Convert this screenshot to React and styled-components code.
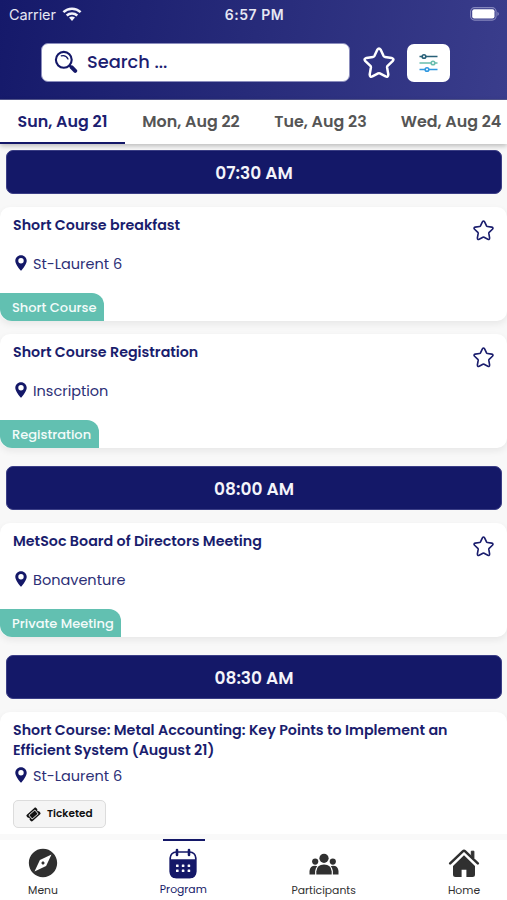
import React from 'react';
import styled, { createGlobalStyle } from 'styled-components';
import { FaTicket } from 'react-icons/fa6';
import { MdExplore } from 'react-icons/md';

const NAVY = '#141868';
const TEAL = '#62c0b1';
const DARK = '#303030';

const GlobalStyle = createGlobalStyle`
  * {
    box-sizing: border-box;
  }
  body {
    margin: 0;
    background: #f8f8f8;
    font-family: Poppins, Inter, sans-serif;
  }
`;

const Screen = styled.div`
  width: 507px;
  height: 900px;
  display: flex;
  flex-direction: column;
  overflow: hidden;
  background: #f8f8f8;
`;

const Header = styled.header`
  flex: none;
  height: 100px;
  background: linear-gradient(100deg, #15196a 0%, #272b7a 50%, #3a3d8c 100%);
  border-bottom: 1px solid #54578f;
`;

const StatusBar = styled.div`
  height: 28px;
  padding: 0 7px 0 9px;
  display: grid;
  grid-template-columns: 1fr auto 1fr;
  align-items: center;
  color: #e6e7f3;
  font-family: Inter, sans-serif;
  font-size: 14.5px;
`;

const Carrier = styled.div`
  height: 26px;
  display: flex;
  align-items: center;
  gap: 6px;
  letter-spacing: -0.1px;
`;

const Clock = styled.div`
  font-weight: 600;
  font-size: 14px;
  letter-spacing: 0.5px;
`;

const Battery = styled.div`
  justify-self: end;
  display: flex;
`;

const SearchRow = styled.div`
  display: flex;
  align-items: center;
  padding: 15px 0 0 41px;
`;

const SearchBox = styled.div`
  width: 309px;
  height: 39px;
  padding: 0 0 2px 12px;
  display: flex;
  align-items: center;
  gap: 9px;
  border: 1px solid #8b8dbd;
  border-radius: 7px;
  background: white;
  color: #1c2070;
  font-size: 17.8px;
  font-weight: 500;
`;

const HeaderStar = styled.div`
  display: flex;
  margin: 1px 12px 0 13px;
  color: white;
`;

const FilterButton = styled.div`
  width: 43px;
  height: 38px;
  display: flex;
  align-items: center;
  justify-content: center;
  border-radius: 7px;
  background: white;
`;

const Tabs = styled.nav`
  position: relative;
  flex: none;
  height: 44px;
  display: flex;
  background: white;
  box-shadow: 0 2px 5px rgba(0, 0, 0, 0.25);
`;

const Tab = styled.div`
  flex: none;
  width: ${({ $width }) => $width}px;
  padding-top: ${({ $active }) => ($active ? 1 : 0)}px;
  padding-bottom: ${({ $active }) => ($active ? 0 : 1)}px;
  display: flex;
  align-items: center;
  justify-content: center;
  white-space: nowrap;
  border-bottom: ${({ $active }) => ($active ? `2px solid ${NAVY}` : 'none')};
  color: ${({ $active }) => ($active ? '#1c2070' : '#555')};
  font-size: 15.9px;
  font-weight: 600;
`;

const List = styled.main`
  flex: 1;
  min-height: 0;
  overflow: hidden;
  padding-top: 6px;
`;

const TimeBar = styled.div`
  height: 44px;
  margin: 0 5px 13px 6px;
  padding-top: 1px;
  display: flex;
  align-items: center;
  justify-content: center;
  border: 1px solid #3b3e86;
  border-radius: 7px;
  background: ${NAVY};
  color: #f4f4fa;
  font-size: 17px;
  font-weight: 600;
`;

const Card = styled.article`
  position: relative;
  height: ${({ $tall }) => ($tall ? 140 : 114)}px;
  margin-bottom: ${({ $last }) => ($last ? 18 : 13)}px;
  padding: 8px 13px 0;
  border-radius: 10px;
  background: white;
  box-shadow: 0 3px 7px rgba(0, 0, 0, 0.07);
  color: #1a1d6d;
`;

const CardTop = styled.div`
  display: flex;
  justify-content: space-between;
`;

const Title = styled.div`
  min-height: ${({ $tall }) => ($tall ? 0 : 39)}px;
  font-size: 14.25px;
  font-weight: 600;
  line-height: 20px;
`;

const CardStar = styled.div`
  display: flex;
  height: 21px;
  margin-top: 5px;
`;

const Place = styled.div`
  height: 20px;
  margin-top: ${({ $tall }) => ($tall ? 6 : 0)}px;
  padding-left: 2px;
  display: flex;
  align-items: center;
  gap: 6px;
  font-size: 14.5px;
  color: #2c2f76;

  svg {
    margin-top: -3px;
  }
`;

const Tag = styled.div`
  position: absolute;
  left: 0;
  bottom: 0;
  width: ${({ $width }) => $width}px;
  height: 28px;
  padding-left: 12px;
  border-radius: 0 12px 0 12px;
  background: ${TEAL};
  color: #f3fbfa;
  font-size: 13px;
  font-weight: 500;
  line-height: 29px;
  white-space: nowrap;
`;

const Ticketed = styled.div`
  width: 93px;
  height: 28px;
  margin-top: 14px;
  padding-left: 13px;
  display: flex;
  align-items: center;
  gap: 7px;
  border: 1px solid #dcdcdc;
  border-radius: 5px;
  background: #f5f5f5;
  color: #111;
  font-size: 10.5px;
  font-weight: 600;

  svg {
    transform: rotate(-42deg);
  }
`;

const BottomNav = styled.footer`
  position: relative;
  flex: none;
  height: 66px;
  display: flex;
  justify-content: space-between;
  border-top: 6px solid #f9f9f9;
  background: white;
`;

const NavItem = styled.div`
  width: 86px;
  padding-top: 9px;
  margin-top: ${({ $active }) => ($active ? -1 : 0)}px;
  display: flex;
  flex-direction: column;
  align-items: center;
  color: ${({ $active }) => ($active ? NAVY : DARK)};
  font-size: 10.8px;
  line-height: 14px;
  background: ${({ $active }) =>
    $active ? `linear-gradient(${NAVY}, ${NAVY}) 23px top / 42px 2px no-repeat` : 'none'};
`;

const NavIcon = styled.div`
  height: 35px;
  display: flex;
  align-items: flex-start;
`;

const CompassIcon = styled(MdExplore)`
  margin-top: -3px;
`;

const StarIcon = ({ size, stroke }) => (
  <svg width={size} height={size} viewBox="0 0 32 32" fill="none" stroke="currentColor"
    strokeWidth={stroke} strokeLinejoin="round">
    <path d="M14.3 2.8Q16 .3 17.7 2.8L20.6 9Q21 9.8 22 9.9L28.6 10.9Q31.6 11.9 29.6 14.1L24.6 18.9Q24 19.6 24.1 20.5L25.3 27.4Q25.2 30.4 22.6 29.4L16.9 26.4Q16 26 15.1 26.4L9.4 29.4Q6.8 30.4 6.7 27.4L7.9 20.5Q8 19.6 7.4 18.9L2.4 14.1Q.4 11.9 3.4 10.9L10 9.9Q11 9.8 11.4 9Z" />
  </svg>
);

const WifiIcon = () => (
  <svg width="20" height="15" viewBox="0 0 20 15" fill="none" stroke="#f3f3fa" strokeWidth="2.5">
    <path d="M1.4 5.1C6.2.5 13.8.5 18.6 5.1" />
    <path d="M4.7 8.5C7.7 5.7 12.3 5.7 15.3 8.5" />
    <path d="M7 10.5Q10 8.3 13 10.5L10 14Z" fill="#f3f3fa" stroke="none" />
  </svg>
);

const BatteryIcon = () => (
  <svg width="30" height="14" viewBox="0 0 30 14">
    <rect x=".6" y=".6" width="25.5" height="12.5" rx="4" fill="none" stroke="#8587bd" strokeWidth="1.1" />
    <rect x="2.2" y="2.2" width="22.3" height="9.3" rx="2" fill="white" />
    <path d="M27.4 4.8Q30.5 6.9 27.4 9Z" fill="#8587bd" />
  </svg>
);

const SearchIcon = () => (
  <svg width="24" height="24" viewBox="0 0 24 24" fill="none" stroke={NAVY} strokeLinecap="round">
    <circle cx="9.8" cy="9.8" r="7.9" strokeWidth="2.1" />
    <path d="M7.3 5.9Q11.8 4.6 14 9" strokeWidth="1.3" />
    <path d="M15.5 15.5L18 18" strokeWidth="2.4" />
    <path d="M17.8 17.4L21.2 20.8" strokeWidth="4" />
  </svg>
);

const FilterIcon = () => (
  <svg width="19" height="20" viewBox="0 0 19 20" fill="none" strokeWidth="1.6">
    <g stroke="#286078">
      <path d="M.5 3.5H3M7 3.5H18.5" />
      <circle cx="5" cy="3.5" r="1.8" />
    </g>
    <g stroke="#68bdad">
      <path d="M.5 10H12M16 10H18.5" />
      <circle cx="14" cy="10" r="1.8" />
    </g>
    <g stroke="#2f98e0">
      <path d="M.5 16.5H6M10 16.5H18.5" />
      <circle cx="8" cy="16.5" r="1.8" />
    </g>
  </svg>
);

const PinIcon = () => (
  <svg width="12" height="16" viewBox="0 0 12 16" fill={NAVY}>
    <path fillRule="evenodd" d="M6 .2C9.3.2 11.7 2.7 11.7 5.8C11.7 8.7 8.8 12.6 6.8 15Q6 16 5.2 15C3.2 12.6.3 8.7.3 5.8C.3 2.7 2.7.2 6 .2ZM6 3.1A2.7 2.7 0 1 0 6 8.5A2.7 2.7 0 1 0 6 3.1Z" />
  </svg>
);

const CalendarIcon = () => (
  <svg width="28" height="31" viewBox="0 0 28 31">
    <rect x="1.2" y="4" width="25.6" height="25.5" rx="6" fill="white" stroke={NAVY} strokeWidth="1.7" />
    <path d="M1 11.3H27V24Q27 30.3 21 30.3H7Q1 30.3 1 24Z" fill={NAVY} />
    <path d="M8 2V7M20 2V7" stroke={NAVY} strokeWidth="2.6" strokeLinecap="round" />
    <g fill="white">
      {[17, 22].map(y => [7, 12.8, 18.6].map(x => (
        <rect key={`${x}-${y}`} x={x} y={y - 0.5} width="2.6" height="2.6" rx=".5" />
      )))}
    </g>
  </svg>
);

const PeopleIcon = () => (
  <svg width="30" height="28" viewBox="0 0 30 28" fill={DARK}>
    <circle cx="15" cy="9.3" r="4.6" />
    <circle cx="6.2" cy="12.6" r="3.1" />
    <circle cx="23.8" cy="12.6" r="3.1" />
    <path d="M7.3 25.5V22.5Q7.8 15.5 15 15.5T22.7 22.5V25.5Z" />
    <path d="M.5 25.5V22Q1 16.8 6 16.8Q7.3 16.8 8.3 17.3Q6.2 19.3 6.1 22V25.5Z" />
    <path d="M29.5 25.5V22Q29 16.8 24 16.8Q22.7 16.8 21.7 17.3Q23.8 19.3 23.9 22V25.5Z" />
  </svg>
);

const HomeIcon = () => (
  <svg width="32" height="29" viewBox="-1 0 32 29">
    <path d="M1.2 14.4L13.8 2.3Q15 1.2 16.2 2.3L28.8 14.4" fill="none" stroke={DARK} strokeWidth="2.5"
      strokeLinecap="round" strokeLinejoin="round" />
    <path d="M22.3 2.2H24.9V9L22.3 6.4Z" fill={DARK} stroke={DARK} strokeLinejoin="round" />
    <path d="M15 6.2L26 17V25.5Q26 28 23.5 28H17.4V20.7H12.6V28H6.5Q4 28 4 25.5V17Z" fill={DARK} />
  </svg>
);

const days = [
  { label: 'Sun, Aug 21', width: 125 },
  { label: 'Mon, Aug 22', width: 132 },
  { label: 'Tue, Aug 23', width: 127 },
  { label: 'Wed, Aug 24', width: 134 },
];

const slots = [
  {
    time: '07:30 AM',
    sessions: [
      { title: ['Short Course breakfast'], place: 'St-Laurent 6', tag: 'Short Course', tagWidth: 104 },
      { title: ['Short Course Registration'], place: 'Inscription', tag: 'Registration', tagWidth: 98.5 },
    ],
  },
  {
    time: '08:00 AM',
    sessions: [
      { title: ['MetSoc Board of Directors Meeting'], place: 'Bonaventure', tag: 'Private Meeting', tagWidth: 121 },
    ],
  },
  {
    time: '08:30 AM',
    sessions: [
      {
        title: [
          'Short Course: Metal Accounting: Key Points to Implement an',
          'Efficient System (August 21)',
        ],
        place: 'St-Laurent 6',
        ticketed: true,
      },
    ],
  },
];

const Session = ({ session, last }) => {
  const tall = session.title.length > 1;
  return (
    <Card $tall={tall} $last={last}>
      <CardTop>
        <Title $tall={tall}>
          {session.title.map(line => <div key={line}>{line}</div>)}
        </Title>
        {!tall && <CardStar><StarIcon size={21} stroke={2.5} /></CardStar>}
      </CardTop>
      <Place $tall={tall}>
        <PinIcon />
        {session.place}
      </Place>
      {session.tag && <Tag $width={session.tagWidth}>{session.tag}</Tag>}
      {session.ticketed && <Ticketed><FaTicket size={13} />Ticketed</Ticketed>}
    </Card>
  );
};

const App = () => (
  <>
    <GlobalStyle />
    <Screen>
      <Header>
        <StatusBar>
          <Carrier>Carrier <WifiIcon /></Carrier>
          <Clock>6:57 PM</Clock>
          <Battery><BatteryIcon /></Battery>
        </StatusBar>
        <SearchRow>
          <SearchBox><SearchIcon />Search ...</SearchBox>
          <HeaderStar><StarIcon size={32} stroke={2.5} /></HeaderStar>
          <FilterButton><FilterIcon /></FilterButton>
        </SearchRow>
      </Header>
      <Tabs>
        {days.map((d, i) => (
          <Tab key={d.label} $active={i === 0} $width={d.width}>{d.label}</Tab>
        ))}
      </Tabs>
      <List>
        {slots.map(slot => (
          <React.Fragment key={slot.time}>
            <TimeBar>{slot.time}</TimeBar>
            {slot.sessions.map((s, i) => (
              <Session key={s.title[0]} session={s} last={i === slot.sessions.length - 1} />
            ))}
          </React.Fragment>
        ))}
      </List>
      <BottomNav>
        <NavItem><NavIcon><CompassIcon size={34} /></NavIcon>Menu</NavItem>
        <NavItem $active><NavIcon><CalendarIcon /></NavIcon>Program</NavItem>
        <NavItem><NavIcon><PeopleIcon /></NavIcon>Participants</NavItem>
        <NavItem><NavIcon><HomeIcon /></NavIcon>Home</NavItem>
      </BottomNav>
    </Screen>
  </>
);

export default App;
